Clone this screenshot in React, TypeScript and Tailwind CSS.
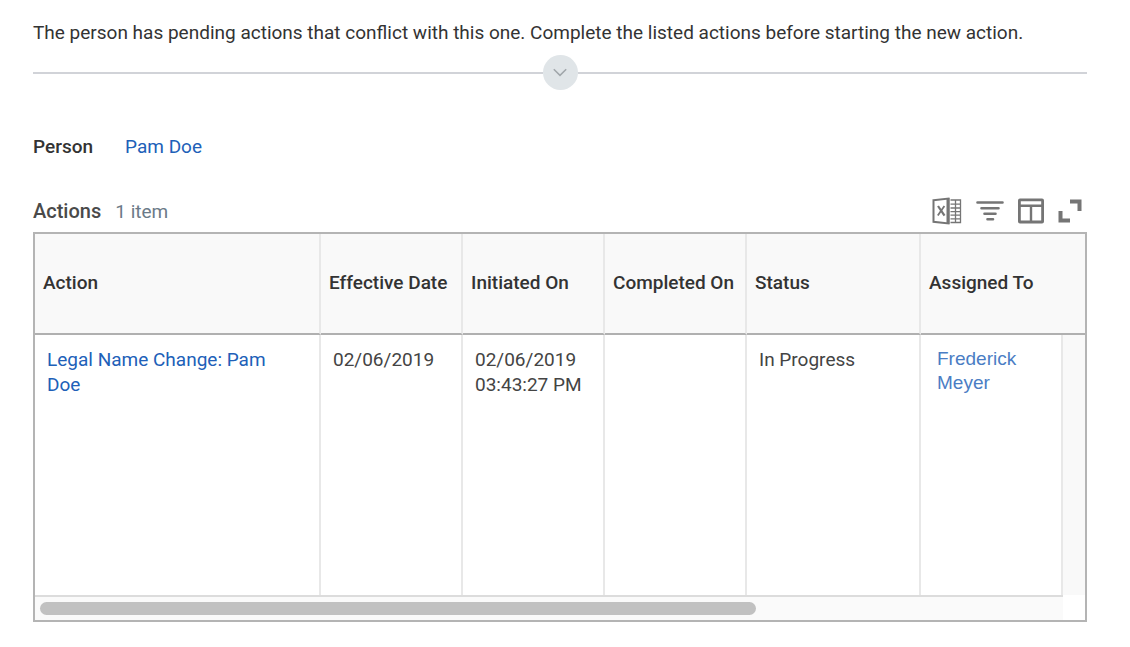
import React from 'react';

type Column = { label: string; width: string };

const columns: Column[] = [
  { label: 'Action', width: 'w-auto' },
  { label: 'Effective Date', width: 'w-[142px]' },
  { label: 'Initiated On', width: 'w-[142px]' },
  { label: 'Completed On', width: 'w-[142px]' },
  { label: 'Status', width: 'w-[174px]' },
  { label: 'Assigned To', width: 'w-[142px]' },
];

const actions = [
  {
    name: 'Legal Name Change: Pam Doe',
    effectiveDate: '02/06/2019',
    initiatedOn: '02/06/2019 03:43:27 PM',
    completedOn: '',
    status: 'In Progress',
    assignedTo: 'Frederick Meyer',
  },
];

const ExcelIcon = () => (
  <svg width="30" height="28" viewBox="0 0 30 28" fill="none" stroke="#757575">
    <path d="M1.5 3.2 16.5 1.5v25L1.5 24.8z" strokeWidth="2" />
    <path d="M16 1v26" strokeWidth="3" />
    <path d="M6 9l6.5 9.6" strokeWidth="2.2" />
    <path d="M12.4 9 5.8 18.6" strokeWidth="1.8" />
    <path d="M18.5 3h10v22.5h-10M18.5 7.2h10M18.5 11h10M18.5 14.6h10M18.5 18.2h10M18.5 21.8h10M23.5 3v22.5" strokeWidth="1.3" />
  </svg>
);

const FilterIcon = () => (
  <svg width="28" height="22" viewBox="0 0 28 22" stroke="#757575" strokeWidth="2.6" strokeLinecap="round">
    <path d="M1.5 2.5h25M5.5 8.3h17M8.5 13.8h11M11.5 19.2h5.5" />
  </svg>
);

const ColumnsIcon = () => (
  <svg width="26" height="26" viewBox="0 0 26 26" fill="none" stroke="#757575">
    <rect x="1.4" y="1.8" width="23.2" height="22.2" rx="0.6" strokeWidth="2.8" />
    <path d="M2 7.8h22M13 8v16" strokeWidth="2.4" />
  </svg>
);

const ExpandIcon = () => (
  <svg width="24" height="24" viewBox="0 0 24 24" fill="#757575">
    <path d="M12 0.5h11.5V12h-4V4.5H12zM0.5 12h4v7.5H12v4H0.5z" />
  </svg>
);

const tools = [
  { label: 'Export to Excel', icon: ExcelIcon, width: 'w-[30px]' },
  { label: 'Filter', icon: FilterIcon, width: 'w-7' },
  { label: 'Column preferences', icon: ColumnsIcon, width: 'w-[26px]' },
  { label: 'Expand table', icon: ExpandIcon, width: 'w-6' },
];

const App: React.FC = () => {
  const cell = 'border-r-2 border-[#e8e8e8] px-3 pt-3 text-left align-top font-normal';

  return (
    <div className="min-h-screen bg-white pt-5 pr-[43px] pl-[33px] font-['Roboto',sans-serif] text-[19px] leading-[25px] text-[#333333]">
      <p>The person has pending actions that conflict with this one. Complete the listed actions before starting the new action.</p>

      <div className="mt-2.5 flex items-center">
        <div className="h-0.5 flex-1 bg-[#d1d3d8]" />
        <button className="flex h-[35px] w-[35px] items-center justify-center rounded-full bg-[#e0e5e8]" aria-label="Show details">
          <svg width="14" height="9" viewBox="0 0 14 9" fill="none" stroke="#a0a6aa" strokeWidth="1.5">
            <path d="M0.8 1.2 7 7.4l6.2-6.2" />
          </svg>
        </button>
        <div className="h-0.5 flex-1 bg-[#d1d3d8]" />
      </div>

      <dl className="mt-11 flex gap-8">
        <dt className="font-medium">Person</dt>
        <dd>
          <a href="#person" className="text-[#2060b8]">Pam Doe</a>
        </dd>
      </dl>

      <section>
        <div className="mt-[38px] flex h-[35px] items-start justify-between">
          <div className="flex items-center gap-3.5 pt-0.5">
            <h2 className="text-[20px] font-medium text-[#4a4a4a]">Actions</h2>
            <span className="text-[#6b7a88]">1 item</span>
          </div>
          <div className="flex items-center gap-3.5 pr-[5px]">
            {tools.map(({ label, icon: Icon, width }) => (
              <button key={label} className={`flex h-7 items-center justify-center ${width}`} aria-label={label}>
                <Icon />
              </button>
            ))}
          </div>
        </div>

        <div className="border-2 border-[#b4b4b4]">
          <table className="w-full table-fixed border-separate border-spacing-0">
            <thead>
              <tr className="h-[101px] bg-[#f9f9f9]">
                {columns.map(({ label, width }) => (
                  <th
                    key={label}
                    scope="col"
                    className={`border-b-2 border-b-[#b0b0b0] px-2 pb-0.5 text-left font-medium whitespace-nowrap ${width} ${label === 'Assigned To' ? '' : 'border-r-2 border-r-[#e8e8e8]'}`}
                  >
                    {label}
                  </th>
                ))}
                <td className="w-[22px] border-b-2 border-[#b0b0b0]" />
              </tr>
            </thead>
            <tbody>
              {actions.map((action) => (
                <tr key={action.name} className="h-[260px] text-[#444444]">
                  <td className={`${cell} pr-10`}>
                    <a href="#action" className="text-[#2060b8]">{action.name}</a>
                  </td>
                  <td className={cell}>{action.effectiveDate}</td>
                  <td className={cell}>{action.initiatedOn}</td>
                  <td className={cell}>{action.completedOn}</td>
                  <td className={cell}>{action.status}</td>
                  <td className={`${cell} pl-4`}>
                    <a href="#assignee" className="block font-['Liberation_Sans',sans-serif] leading-6 text-[#4a7dc4]">{action.assignedTo}</a>
                  </td>
                  <td className="bg-[#f9f9f9]" />
                </tr>
              ))}
            </tbody>
          </table>
          <div className="mr-[22px] border-t-2 border-[#dcdcdc] bg-[#fafafa] py-[5px] pl-[5px]">
            <div className="h-[13px] w-[70%] rounded-full bg-[#c1c1c1]" />
          </div>
        </div>
      </section>
    </div>
  );
};

export default App;
